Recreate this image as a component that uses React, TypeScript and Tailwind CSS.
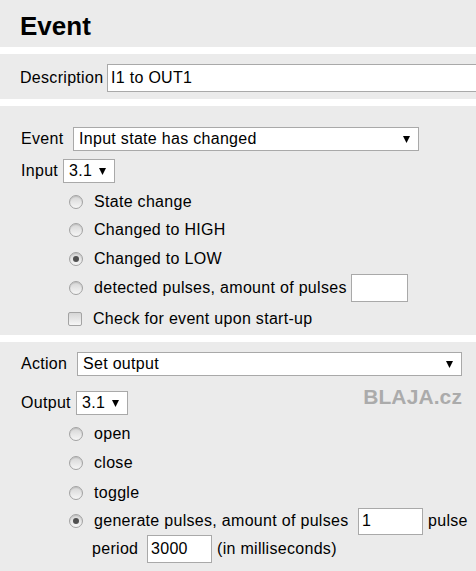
import React from 'react';

function Arrow() {
  return (
    <svg width="7" height="7" viewBox="0 0 7 7" className="shrink-0">
      <polygon points="0,0 7,0 3.5,7" fill="#000" />
    </svg>
  );
}

function Select({ value, className }: { value: string; className: string }) {
  return (
    <div
      className={
        'flex items-center justify-between shrink-0 bg-white border border-[#a9a9a9] pl-[5px] pr-[8px] ' + className
      }
    >
      <span className="leading-none">{value}</span>
      <Arrow />
    </div>
  );
}

function Radio({ checked }: { checked?: boolean }) {
  return (
    <span className="w-[14px] h-[14px] rounded-full border border-[#a3a3a3] bg-gradient-to-b from-[#d6d6d6] to-[#f6f6f6] shadow-[inset_0_1px_1px_rgba(0,0,0,0.12)] flex items-center justify-center shrink-0">
      {checked && <span className="w-[6px] h-[6px] rounded-full bg-[#4f4f4f]" />}
    </span>
  );
}

function Checkbox() {
  return (
    <span className="w-[14px] h-[14px] rounded-[2px] border border-[#a3a3a3] bg-gradient-to-b from-[#d6d6d6] to-[#f6f6f6] shrink-0" />
  );
}

function RadioRow({ label, checked, h, w, children }: { label: string; checked?: boolean; h: string; w?: string; children?: React.ReactNode }) {
  return (
    <div className={'flex items-center pl-[69px] ' + h}>
      <Radio checked={checked} />
      <span className={'ml-[11px] whitespace-nowrap shrink-0 ' + (w ?? '')}>{label}</span>
      {children}
    </div>
  );
}

export default function App() {
  return (
    <div className="w-[476px] h-[571px] overflow-hidden bg-white text-[16px] tracking-[0.3px] text-black font-['Liberation_Sans',Arial,sans-serif]">
      <div className="h-[47px] bg-[#ebebeb] flex items-center pl-[20px] pt-[4px]">
        <h1 className="text-[26px] font-bold leading-none tracking-normal">Event</h1>
      </div>

      <div className="mt-[7px] h-[45px] bg-[#ebebeb] flex items-center pl-[20px] pt-[2px]">
        <span className="w-[87px] shrink-0">Description</span>
        <div className="h-[28px] w-[380px] shrink-0 bg-white border border-[#a9a9a9] flex items-center pl-[3px]">
          I1 to OUT1
        </div>
      </div>

      <div className="mt-[7px] h-[229px] bg-[#ebebeb] pt-[21px]">
        <div className="flex items-center pl-[21px] h-[24px]">
          <span className="w-[52px] shrink-0">Event</span>
          <Select value="Input state has changed" className="w-[346px] h-[24px]" />
        </div>
        <div className="flex items-center pl-[21px] h-[24px] mt-[8px]">
          <span className="w-[42px] shrink-0">Input</span>
          <Select value="3.1" className="w-[52px] h-[24px]" />
        </div>
        <div className="mt-[5px]">
          <RadioRow label="State change" h="h-[28px]" />
          <RadioRow label="Changed to HIGH" h="h-[28px]" />
          <RadioRow label="Changed to LOW" checked h="h-[29px]" />
          <RadioRow label="detected pulses, amount of pulses" h="h-[30px]" w="w-[257px]">
            <div className="w-[57px] h-[28px] shrink-0 bg-white border border-[#a9a9a9]" />
          </RadioRow>
          <div className="flex items-center pl-[68px] h-[32px]">
            <Checkbox />
            <span className="ml-[11px]">Check for event upon start-up</span>
          </div>
        </div>
      </div>

      <div className="mt-[7px] h-[229px] bg-[#ebebeb] pt-[10px]">
        <div className="flex items-center pl-[21px] h-[24px]">
          <span className="w-[56px] shrink-0">Action</span>
          <Select value="Set output" className="w-[385px] h-[24px]" />
        </div>
        <div className="flex items-center pl-[21px] pr-[14px] h-[24px] mt-[15px]">
          <span className="w-[55px] shrink-0">Output</span>
          <Select value="3.1" className="w-[52px] h-[24px]" />
          <span className="ml-auto mb-[13px] text-[21px] font-bold text-[#ababab] leading-none tracking-[0.1px]">BLAJA.cz</span>
        </div>
        <div className="mt-[4px]">
          <RadioRow label="open" h="h-[29px]" />
          <RadioRow label="close" h="h-[30px]" />
          <RadioRow label="toggle" h="h-[29px]" />
          <RadioRow label="generate pulses, amount of pulses" checked h="h-[28px]" w="w-[264px]">
            <div className="w-[65px] h-[27px] shrink-0 bg-white border border-[#a9a9a9] flex items-center pl-[3px]">1</div>
            <span className="ml-[5px] whitespace-nowrap">pulse</span>
          </RadioRow>
          <div className="flex items-center pl-[92px] h-[28px]">
            <span className="w-[55px] shrink-0">period</span>
            <div className="w-[65px] h-[28px] shrink-0 bg-white border border-[#a9a9a9] flex items-center pl-[3px]">3000</div>
            <span className="ml-[5px]">(in milliseconds)</span>
          </div>
        </div>
      </div>
    </div>
  );
}
